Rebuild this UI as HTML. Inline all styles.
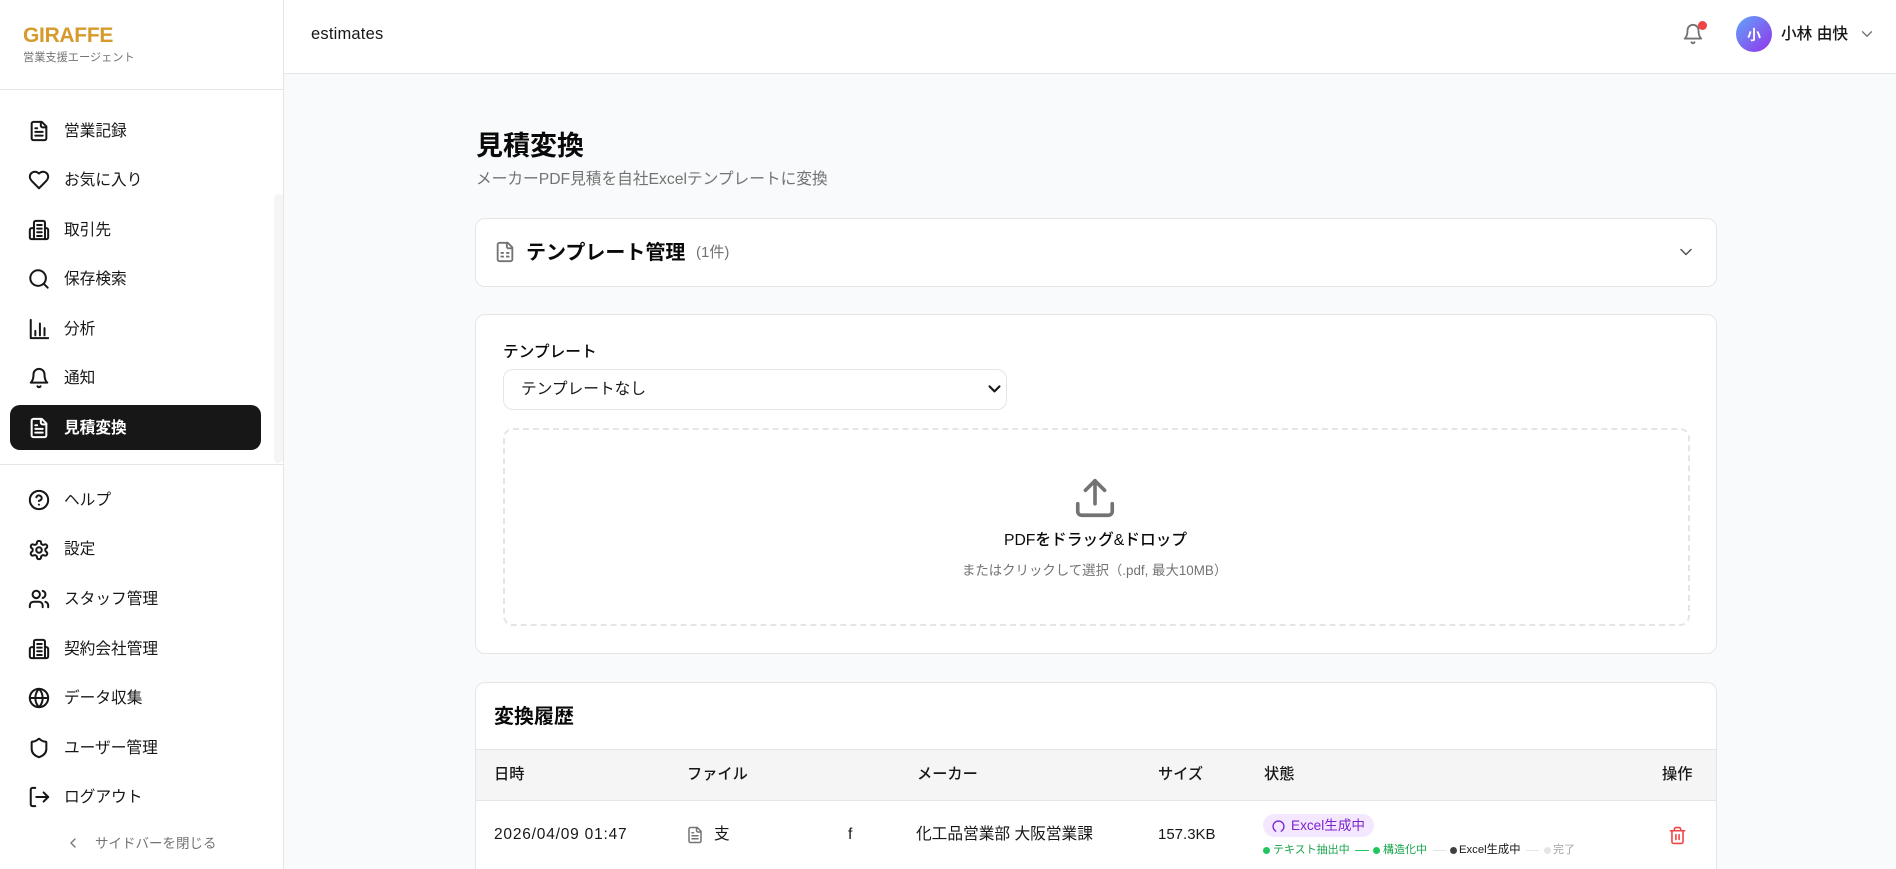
<!DOCTYPE html>
<html lang="ja">
<head>
<meta charset="utf-8">
<title>estimates</title>
<style>
html,body{margin:0;padding:0;width:1896px;height:869px;overflow:hidden;background:#f9fafb;}
body{position:relative;font-family:"Liberation Sans","Noto Sans CJK JP",sans-serif;color:#171717;}
.a{position:absolute;white-space:nowrap;line-height:1;}
svg{position:absolute;fill:none;stroke:currentColor;stroke-width:2;stroke-linecap:round;stroke-linejoin:round;}
.box{position:absolute;box-sizing:border-box;}
.card{position:absolute;box-sizing:border-box;background:#fff;border:1px solid #e5e5e5;border-radius:10px;}
.nav{font-size:15.7px;left:64px;color:#171717;}
.ic{left:28px;width:22px;height:22px;color:#171717;stroke-width:2.2;}
.th{font-size:15.2px;font-weight:500;color:#171717;}
.td{font-size:15.7px;color:#171717;}
.step{font-size:11px;}
.dot{position:absolute;border-radius:50%;width:7px;height:7px;}
.ln{position:absolute;height:1px;}
</style>
</head>
<body>
<!-- sidebar -->
<div class="box" style="left:0;top:0;width:284px;height:869px;background:#fff;border-right:1px solid #e5e5e5;"></div>
<div class="box" style="left:0;top:89px;width:283px;height:1px;background:#e5e5e5;"></div>
<div class="box" style="left:274px;top:194px;width:9px;height:269px;background:#f5f5f5;border-radius:4px;"></div>
<div class="box" style="left:0;top:464px;width:283px;height:1px;background:#e5e5e5;"></div>
<div class="a" style="left:23px;top:25px;font-size:21px;font-weight:700;color:#d69a2d;letter-spacing:-.3px;">GIRAFFE</div>
<div class="a" style="left:23px;top:53px;font-size:11.2px;color:#737373;">営業支援エージェント</div>

<div class="box" style="left:10px;top:405px;width:251px;height:45px;background:#171717;border-radius:10px;"></div>

<svg class="ic" style="top:120px" viewBox="0 0 24 24"><path d="M15 2H6a2 2 0 0 0-2 2v16a2 2 0 0 0 2 2h12a2 2 0 0 0 2-2V7Z"/><path d="M14 2v4a2 2 0 0 0 2 2h4"/><path d="M10 9H8"/><path d="M16 13H8"/><path d="M16 17H8"/></svg>
<div class="a nav" style="top:124px">営業記録</div>
<svg class="ic" style="top:169px" viewBox="0 0 24 24"><path d="M19 14c1.49-1.46 3-3.21 3-5.5A5.5 5.5 0 0 0 16.5 3c-1.76 0-3 .5-4.5 2-1.5-1.5-2.74-2-4.5-2A5.5 5.5 0 0 0 2 8.5c0 2.3 1.5 4.05 3 5.5l7 7Z"/></svg>
<div class="a nav" style="top:173px">お気に入り</div>
<svg class="ic" style="top:219px" viewBox="0 0 24 24"><path d="M6.500 22V4a2 2 0 0 1 2-2h8a2 2 0 0 1 2 2v18"/><path d="M6.500 10H4a2 2 0 0 0-2 2v8a2 2 0 0 0 2 2h16a2 2 0 0 0 2-2v-8a2 2 0 0 0-2-2h-1.500"/><path d="M10 6.500h5M10 10.500h5M10 14.500h5M10 18.500h5"/></svg>
<div class="a nav" style="top:223px">取引先</div>
<svg class="ic" style="top:268px" viewBox="0 0 24 24"><circle cx="11" cy="11" r="8.500"/><path d="m21.500 21.500-4.400-4.400"/></svg>
<div class="a nav" style="top:272px">保存検索</div>
<svg class="ic" style="top:318px" viewBox="0 0 24 24"><path d="M3 2v20h19"/><path d="M8 19v-5M13 19V6M18 19v-8"/></svg>
<div class="a nav" style="top:322px">分析</div>
<svg class="ic" style="top:367px" viewBox="0 0 24 24"><path d="M6 8a6 6 0 0 1 12 0c0 7 3 9 3 9H3s3-2 3-9"/><path d="M10.300 21a1.940 1.940 0 0 0 3.400 0"/></svg>
<div class="a nav" style="top:371px">通知</div>
<svg class="ic" style="top:417px;color:#fff" viewBox="0 0 24 24"><path d="M15 2H6a2 2 0 0 0-2 2v16a2 2 0 0 0 2 2h12a2 2 0 0 0 2-2V7Z"/><path d="M14 2v4a2 2 0 0 0 2 2h4"/><path d="M10 9H8"/><path d="M16 13H8"/><path d="M16 17H8"/></svg>
<div class="a nav" style="top:421px;color:#fff;font-weight:700">見積変換</div>

<svg class="ic" style="top:489px" viewBox="0 0 24 24"><circle cx="12" cy="12" r="10"/><path d="M9.090 9a3 3 0 0 1 5.830 1c0 2-3 3-3 3"/><path d="M12 17h.01"/></svg>
<div class="a nav" style="top:493px">ヘルプ</div>
<svg class="ic" style="top:539px" viewBox="0 0 24 24"><path d="M12.220 2h-.44a2 2 0 0 0-2 2v.18a2 2 0 0 1-1 1.730l-.43.25a2 2 0 0 1-2 0l-.15-.08a2 2 0 0 0-2.730.73l-.22.38a2 2 0 0 0 .73 2.730l.15.1a2 2 0 0 1 1 1.720v.51a2 2 0 0 1-1 1.740l-.15.09a2 2 0 0 0-.73 2.730l.22.38a2 2 0 0 0 2.730.73l.15-.08a2 2 0 0 1 2 0l.43.25a2 2 0 0 1 1 1.730V20a2 2 0 0 0 2 2h.44a2 2 0 0 0 2-2v-.18a2 2 0 0 1 1-1.730l.43-.25a2 2 0 0 1 2 0l.15.08a2 2 0 0 0 2.730-.73l.22-.39a2 2 0 0 0-.73-2.730l-.15-.08a2 2 0 0 1-1-1.740v-.5a2 2 0 0 1 1-1.740l.15-.09a2 2 0 0 0 .73-2.730l-.22-.38a2 2 0 0 0-2.730-.73l-.15.08a2 2 0 0 1-2 0l-.43-.25a2 2 0 0 1-1-1.730V4a2 2 0 0 0-2-2z"/><circle cx="12" cy="12" r="3"/></svg>
<div class="a nav" style="top:542px">設定</div>
<svg class="ic" style="top:588px" viewBox="0 0 24 24"><path d="M16 21v-2a4 4 0 0 0-4-4H6a4 4 0 0 0-4 4v2"/><circle cx="9" cy="7" r="4"/><path d="M22 21v-2a4 4 0 0 0-3-3.870"/><path d="M16 3.130a4 4 0 0 1 0 7.750"/></svg>
<div class="a nav" style="top:592px">スタッフ管理</div>
<svg class="ic" style="top:638px" viewBox="0 0 24 24"><path d="M6.500 22V4a2 2 0 0 1 2-2h8a2 2 0 0 1 2 2v18"/><path d="M6.500 10H4a2 2 0 0 0-2 2v8a2 2 0 0 0 2 2h16a2 2 0 0 0 2-2v-8a2 2 0 0 0-2-2h-1.500"/><path d="M10 6.500h5M10 10.500h5M10 14.500h5M10 18.500h5"/></svg>
<div class="a nav" style="top:642px">契約会社管理</div>
<svg class="ic" style="top:687px" viewBox="0 0 24 24"><circle cx="12" cy="12" r="10"/><path d="M12 2a14.500 14.500 0 0 0 0 20 14.500 14.500 0 0 0 0-20"/><path d="M2 12h20"/></svg>
<div class="a nav" style="top:691px">データ収集</div>
<svg class="ic" style="top:737px" viewBox="0 0 24 24"><path d="M20 13c0 5-3.500 7.500-7.660 8.950a1 1 0 0 1-.67-.01C7.500 20.500 4 18 4 13V6a1 1 0 0 1 1-1c2 0 4.500-1.200 6.240-2.720a1.170 1.170 0 0 1 1.520 0C14.510 3.810 17 5 19 5a1 1 0 0 1 1 1z"/></svg>
<div class="a nav" style="top:741px">ユーザー管理</div>
<svg class="ic" style="top:786px" viewBox="0 0 24 24"><path d="M8 22H5a2 2 0 0 1-2-2V4a2 2 0 0 1 2-2h3"/><path d="m17 17 5-5-5-5"/><path d="M22 12H9"/></svg>
<div class="a nav" style="top:790px">ログアウト</div>
<svg style="left:65px;top:835px;width:16px;height:16px;color:#737373" viewBox="0 0 24 24"><path d="m15 18-6-6 6-6"/></svg>
<div class="a" style="left:95px;top:837px;font-size:13.5px;color:#737373;">サイドバーを閉じる</div>

<!-- header -->
<div class="box" style="left:284px;top:0;width:1612px;height:74px;background:#fff;border-bottom:1px solid #e5e5e5;"></div>
<div class="a" style="left:311px;top:26px;font-size:16.5px;letter-spacing:.2px;color:#171717;">estimates</div>
<svg style="left:1682px;top:23px;width:22px;height:22px;color:#737373" viewBox="0 0 24 24"><path d="M6 8a6 6 0 0 1 12 0c0 7 3 9 3 9H3s3-2 3-9"/><path d="M10.300 21a1.940 1.940 0 0 0 3.400 0"/></svg>
<div class="box" style="left:1698px;top:21px;width:9px;height:9px;border-radius:50%;background:#ef4444;"></div>
<div class="box" style="left:1736px;top:16px;width:36px;height:36px;border-radius:50%;background:linear-gradient(135deg,#60a5fa,#9333ea);"></div>
<div class="a" style="left:1747px;top:28px;font-size:14px;font-weight:700;color:#fff;">小</div>
<div class="a" style="left:1781px;top:27px;font-size:15.7px;font-weight:500;color:#171717;">小林 由快</div>
<svg style="left:1858px;top:25px;width:18px;height:18px;color:#737373;stroke-width:1.8" viewBox="0 0 24 24"><path d="m6 9 6 6 6-6"/></svg>

<!-- heading -->
<div class="a" style="left:476px;top:133px;font-size:27px;font-weight:700;color:#0a0a0a;">見積変換</div>
<div class="a" style="left:476px;top:172px;font-size:15.7px;color:#737373;">メーカーPDF見積を自社Excelテンプレートに変換</div>

<!-- card 1 -->
<div class="card" style="left:475px;top:218px;width:1242px;height:69px;"></div>
<svg style="left:494px;top:241px;width:22px;height:22px;color:#737373" viewBox="0 0 24 24"><path d="M15 2H6a2 2 0 0 0-2 2v16a2 2 0 0 0 2 2h12a2 2 0 0 0 2-2V7Z"/><path d="M14 2v4a2 2 0 0 0 2 2h4"/><path d="M8 13h2M14 13h2M8 17h2M14 17h2"/></svg>
<div class="a" style="left:526px;top:243px;font-size:20px;font-weight:700;color:#0a0a0a;">テンプレート管理</div>
<div class="a" style="left:696px;top:245px;font-size:15px;color:#737373;">(1件)</div>
<svg style="left:1676px;top:242px;width:20px;height:20px;color:#525252;stroke-width:1.8" viewBox="0 0 24 24"><path d="m6 9 6 6 6-6"/></svg>

<!-- card 2 -->
<div class="card" style="left:475px;top:314px;width:1242px;height:340px;"></div>
<div class="a" style="left:503px;top:345px;font-size:15.7px;font-weight:500;color:#0a0a0a;">テンプレート</div>
<div class="box" style="left:503px;top:369px;width:504px;height:41px;border:1px solid #e5e5e5;border-radius:10px;background:#fff;"></div>
<div class="a" style="left:521px;top:382px;font-size:15.7px;color:#171717;">テンプレートなし</div>
<svg style="left:986px;top:380px;width:17px;height:17px;color:#171717;stroke-width:3" viewBox="0 0 24 24"><path d="m5 9 7 7 7-7"/></svg>
<div class="box" style="left:503px;top:428px;width:1187px;height:198px;border:2px dashed #e5e5e5;border-radius:10px;"></div>
<svg style="left:1072px;top:475px;width:46px;height:46px;color:#737373;stroke-width:1.9" viewBox="0 0 24 24"><path d="M21 15v4a2 2 0 0 1-2 2H5a2 2 0 0 1-2-2v-4"/><path d="m17 8-5-5-5 5"/><path d="M12 3v12"/></svg>
<div class="a" style="left:1004px;top:533px;font-size:15.7px;font-weight:500;color:#0a0a0a;">PDFをドラッグ&amp;ドロップ</div>
<div class="a" style="left:962px;top:564px;font-size:13.4px;color:#737373;">またはクリックして選択（.pdf, 最大10MB）</div>

<!-- card 3 -->
<div class="card" style="left:475px;top:682px;width:1242px;height:187px;overflow:hidden;border-bottom:0;border-radius:10px 10px 0 0;">
  <div class="box" style="left:0;top:66px;width:1240px;height:52px;background:#f5f5f5;border-top:1px solid #e5e5e5;border-bottom:1px solid #e5e5e5;"></div>
</div>
<div class="a" style="left:494px;top:707px;font-size:20px;font-weight:700;color:#0a0a0a;">変換履歴</div>
<div class="a th" style="left:494px;top:767px;">日時</div>
<div class="a th" style="left:687px;top:767px;">ファイル</div>
<div class="a th" style="left:917px;top:767px;">メーカー</div>
<div class="a th" style="left:1158px;top:767px;">サイズ</div>
<div class="a th" style="left:1264px;top:767px;">状態</div>
<div class="a th" style="left:1662px;top:767px;">操作</div>

<div class="a td" style="left:494px;top:827px;font-size:15.5px;letter-spacing:.8px;">2026/04/09 01:47</div>
<svg style="left:686px;top:826px;width:18px;height:18px;color:#737373" viewBox="0 0 24 24"><path d="M15 2H6a2 2 0 0 0-2 2v16a2 2 0 0 0 2 2h12a2 2 0 0 0 2-2V7Z"/><path d="M14 2v4a2 2 0 0 0 2 2h4"/><path d="M10 9H8"/><path d="M16 13H8"/><path d="M16 17H8"/></svg>
<div class="a td" style="left:714px;top:827px;">支</div>
<div class="a td" style="left:848px;top:827px;">f</div>
<div class="a td" style="left:916px;top:827px;">化工品営業部 大阪営業課</div>
<div class="a" style="left:1158px;top:827px;font-size:15px;">157.3KB</div>

<div class="box" style="left:1263px;top:814px;width:111px;height:23px;border-radius:12px;background:#f3e8ff;"></div>
<svg style="left:1272px;top:820px;width:13px;height:13px;color:#7e22ce;stroke-width:2.5" viewBox="0 0 24 24"><path d="M7 20.600A10 10 0 1 1 17 20.600"/></svg>
<div class="a" style="left:1291px;top:819px;font-size:13.6px;color:#7e22ce;">Excel生成中</div>

<div class="dot" style="left:1263px;top:847px;background:#22c55e;"></div>
<div class="a step" style="left:1273px;top:845px;color:#16a34a;">テキスト抽出中</div>
<div class="ln" style="left:1355px;top:850px;width:14px;background:#22c55e;"></div>
<div class="dot" style="left:1373px;top:847px;background:#22c55e;"></div>
<div class="a step" style="left:1383px;top:845px;color:#16a34a;">構造化中</div>
<div class="ln" style="left:1433px;top:850px;width:13px;background:#e5e5e5;"></div>
<div class="dot" style="left:1450px;top:847px;background:#404040;"></div>
<div class="a step" style="left:1459px;top:845px;font-size:11.3px;color:#171717;">Excel生成中</div>
<div class="ln" style="left:1526px;top:850px;width:13px;background:#e5e5e5;"></div>
<div class="dot" style="left:1544px;top:847px;background:#e5e5e5;"></div>
<div class="a step" style="left:1553px;top:845px;color:#a3a3a3;">完了</div>

<svg style="left:1668px;top:826px;width:19px;height:19px;color:#ef4444" viewBox="0 0 24 24"><path d="M3 6h18"/><path d="M19 6v14c0 1-1 2-2 2H7c-1 0-2-1-2-2V6"/><path d="M8 6V4c0-1 1-2 2-2h4c1 0 2 1 2 2v2"/><path d="M10 11v6"/><path d="M14 11v6"/></svg>
</body>
</html>
